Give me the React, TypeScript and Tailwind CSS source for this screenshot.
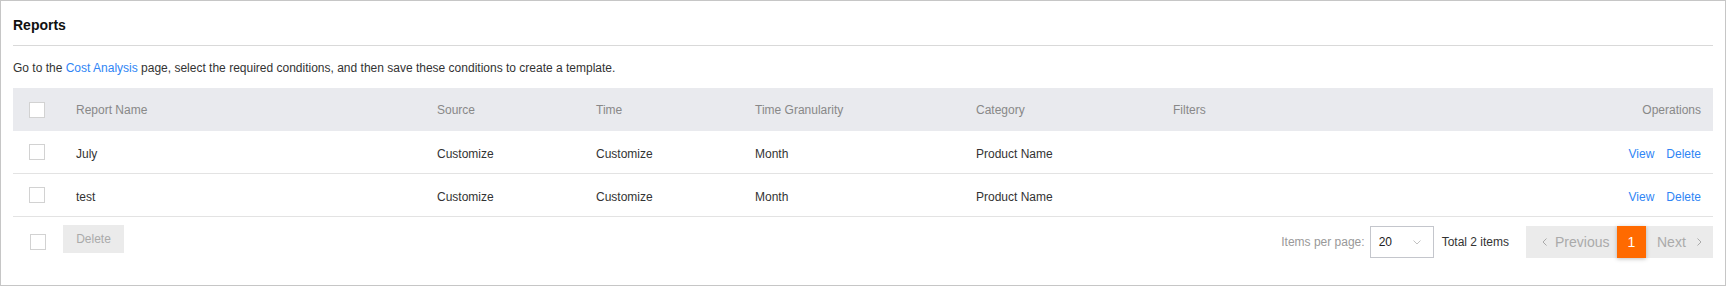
const rows = [
  { name: "July", source: "Customize", time: "Customize", granularity: "Month", category: "Product Name" },
  { name: "test", source: "Customize", time: "Customize", granularity: "Month", category: "Product Name" },
];

const cols = "grid grid-cols-[47px_361px_159px_159px_221px_197px_1fr]";

function Checkbox() {
  return <span className="block h-[16px] w-[16px] border border-[#d2d2d2] bg-white" />;
}

function Chevron({ dir }: { dir: "left" | "right" | "down" }) {
  if (dir === "down") {
    return (
      <svg width="10" height="8" viewBox="0 0 10 8" fill="none">
        <path d="M1.5 2.5l3.5 3.5 3.5-3.5" stroke="currentColor" strokeWidth="1" />
      </svg>
    );
  }
  return (
    <svg width="8" height="10" viewBox="0 0 8 10" fill="none">
      <path d={dir === "left" ? "M5.5 1.5 2 5l3.5 3.5" : "M2.5 1.5 6 5 2.5 8.5"} stroke="currentColor" strokeWidth="1" />
    </svg>
  );
}

export default function App() {
  return (
    <div className="h-[286px] w-[1726px] border border-[#c6c6c6] bg-white px-[12px] font-['Liberation_Sans',Arial,sans-serif] text-[12px] leading-[14px] text-[#333]">
      <div className="flex h-[45px] items-center border-b border-[#d9d9d9] pt-[4px] text-[14px] font-bold text-[#111]">
        Reports
      </div>
      <div className="flex h-[42px] items-center pt-[2px]">
        <span>
          Go to the <a className="text-[#2f85f5]">Cost Analysis</a> page, select the required conditions, and then save these conditions to create a template.
        </span>
      </div>

      <div className={`${cols} h-[43px] items-center bg-[#e9eaee] text-[#888]`}>
        <div className="pl-[16px]">
          <Checkbox />
        </div>
        <div className="pl-[16px]">Report Name</div>
        <div className="pl-[16px]">Source</div>
        <div className="pl-[16px]">Time</div>
        <div className="pl-[16px]">Time Granularity</div>
        <div className="pl-[16px]">Category</div>
        <div className="flex justify-between pl-[16px] pr-[12px]">
          <span>Filters</span>
          <span>Operations</span>
        </div>
      </div>

      {rows.map((r) => (
        <div key={r.name} className={`${cols} h-[43px] items-center border-b border-[#e3e3e3]`}>
          <div className="pl-[16px]">
            <Checkbox />
          </div>
          <div className="pl-[16px] pt-[3px]">{r.name}</div>
          <div className="pl-[16px] pt-[3px]">{r.source}</div>
          <div className="pl-[16px] pt-[3px]">{r.time}</div>
          <div className="pl-[16px] pt-[3px]">{r.granularity}</div>
          <div className="pl-[16px] pt-[3px]">{r.category}</div>
          <div className="flex justify-end gap-[12px] pr-[12px] pt-[3px] text-[#2f85f5]">
            <a>View</a>
            <a>Delete</a>
          </div>
        </div>
      ))}

      <div className="flex h-[67px] items-start justify-between pt-[8px]">
        <div className="flex items-start pl-[17px]">
          <span className="mt-[9px]">
            <Checkbox />
          </span>
          <button
            type="button"
            className="ml-[17px] h-[28px] w-[61px] bg-[#ebebeb] text-[12px] text-[#aaa]"
          >
            Delete
          </button>
        </div>

        <div className="mt-[1px] flex items-center">
          <span className="text-[#999]">Items per page:</span>
          <div className="ml-[5px] flex h-[32px] w-[64px] items-center justify-between border border-[#c4c6cc] pl-[8px] pr-[11px] text-[#222]">
            <span>20</span>
            <span className="text-[#c2c2c2]">
              <Chevron dir="down" />
            </span>
          </div>
          <span className="ml-[8px] text-[#333]">Total 2 items</span>
          <div className="ml-[17px] flex h-[32px] items-stretch bg-[#ebebeb] text-[14px] text-[#aaa]">
            <div className="flex w-[91px] items-center pl-[15px]">
              <Chevron dir="left" />
              <span className="ml-[6px]">Previous</span>
            </div>
            <div className="flex w-[29px] items-center justify-center bg-[#ff6a00] text-white shadow-[0_1px_4px_rgba(0,0,0,0.25)]">
              1
            </div>
            <div className="flex w-[67px] items-center pl-[11px]">
              <span>Next</span>
              <span className="ml-[9px]">
                <Chevron dir="right" />
              </span>
            </div>
          </div>
        </div>
      </div>
    </div>
  );
}
